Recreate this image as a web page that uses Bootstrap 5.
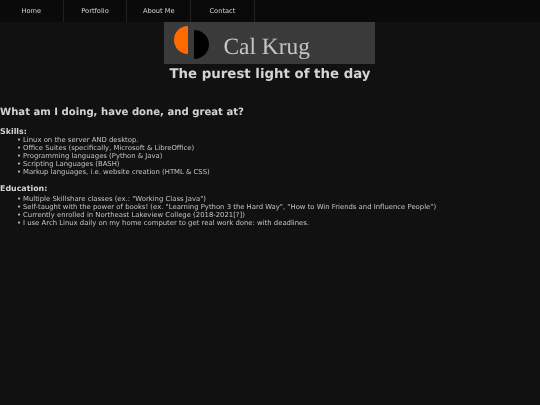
<!DOCTYPE html>
<html lang="en">
<head>
<meta charset="utf-8">
<title>Cal Krug</title>
<link href="https://cdn.jsdelivr.net/npm/bootstrap@5.3.0/dist/css/bootstrap.min.css" rel="stylesheet">
<style>
html, body { background: #111111; }
body { font-family: "DejaVu Sans", sans-serif; color: #c4c4c4; font-size: 6.86px; line-height: 8px; margin: 0; min-height: 405px; text-rendering: geometricPrecision; }
.topbar { background: #0a0a0a; height: 22px; filter: blur(.2px); }
main { filter: blur(.25px); }
.topbar .nav-link { width: 63.7px; height: 22px; padding: 0; color: #d4d4d4; font-size: 6.67px; line-height: 22px; text-align: center; border-right: 1px solid #222222; }
.banner { width: 211px; height: 42px; background: #3a3a3a; gap: 15px; padding-left: 10px; margin-right: 2px; }
.banner-name { font-family: "Liberation Serif", serif; font-size: 23.4px; line-height: 42px; color: #c4c4c4; padding-top: 8px; }
.tagline { font-size: 13.33px; line-height: 17px; font-weight: 700; color: #d4d4d4; margin: 2px 0 0; }
.main-q { font-size: 10.1px; line-height: 14px; font-weight: 700; color: #d4d4d4; margin: 23px 0 7px; }
.sect-h { font-size: 7.9px; line-height: 9px; font-weight: 700; color: #d4d4d4; margin: 0; }
.sect-list { list-style: none; padding: 0 0 0 17px; margin: 0 0 8px; }
.sect-list li { height: 8px; white-space: nowrap; }
.sect-list li::before { content: "•"; display: inline-block; width: 6px; }
.edu-h { margin-bottom: 2px; }
</style>
</head>
<body>
<nav class="topbar">
  <ul class="nav">
    <li class="nav-item"><a class="nav-link" href="#">Home</a></li>
    <li class="nav-item"><a class="nav-link" href="#">Portfolio</a></li>
    <li class="nav-item"><a class="nav-link" href="#">About Me</a></li>
    <li class="nav-item"><a class="nav-link" href="#">Contact</a></li>
  </ul>
</nav>
<main>
  <div class="d-flex justify-content-center">
    <div class="banner d-flex align-items-center">
      <svg width="35" height="42" viewBox="0 0 35 42" aria-hidden="true">
        <path d="M14 4 A14 14 0 0 0 14 32 Z" fill="#ff6a00"/>
        <path d="M20 8 A15 14.5 0 0 1 20 37 Z" fill="#000"/>
      </svg>
      <span class="banner-name">Cal Krug</span>
    </div>
  </div>
  <h1 class="tagline text-center">The purest light of the day</h1>
  <h2 class="main-q">What am I doing, have done, and great at?</h2>
  <h3 class="sect-h">Skills:</h3>
  <ul class="sect-list">
    <li>Linux on the server AND desktop.</li>
    <li>Office Suites (specifically, Microsoft &amp; LibreOffice)</li>
    <li>Programming languages (Python &amp; Java)</li>
    <li>Scripting Languages (BASH)</li>
    <li>Markup languages, i.e. website creation (HTML &amp; CSS)</li>
  </ul>
  <h3 class="sect-h edu-h">Education:</h3>
  <ul class="sect-list">
    <li>Multiple Skillshare classes (ex.: "Working Class Java")</li>
    <li>Self-taught with the power of books! (ex. "Learning Python 3 the Hard Way", "How to Win Friends and Influence People")</li>
    <li>Currently enrolled in Northeast Lakeview College (2018-2021[?])</li>
    <li>I use Arch Linux daily on my home computer to get real work done: with deadlines.</li>
  </ul>
</main>
<script src="https://cdn.jsdelivr.net/npm/bootstrap@5.3.0/dist/js/bootstrap.bundle.min.js"></script>
</body>
</html>
